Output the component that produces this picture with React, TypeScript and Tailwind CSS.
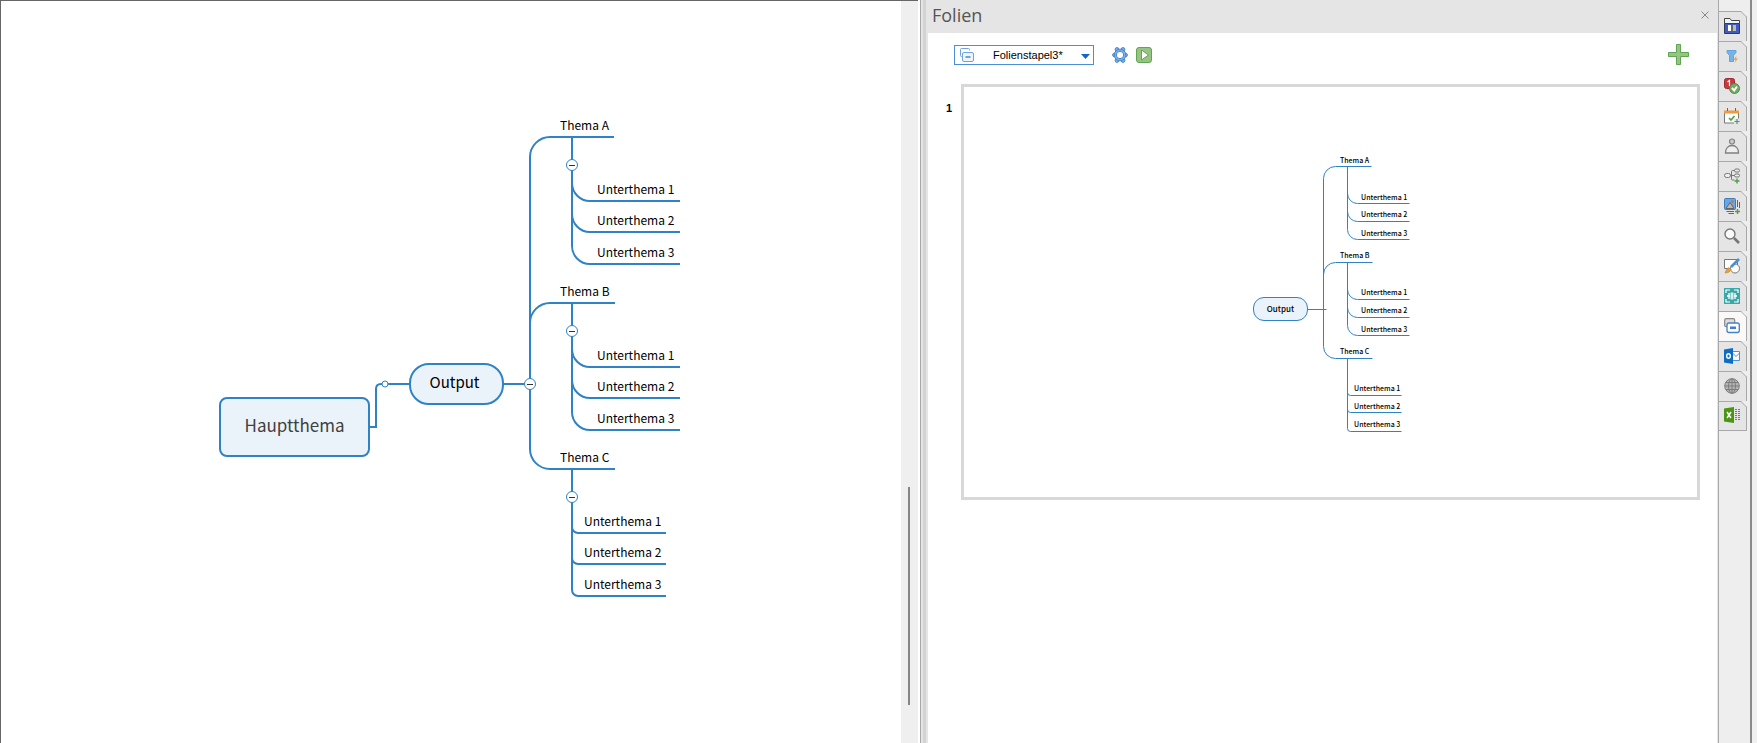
import type { ReactNode } from "react"
import clsx from "clsx"

const BLUE = "#2f83c4"

type Topic = { title: string; y: number; width: number; radius: number; subX: number; subEnd: number }

// map coordinates, origin at the top left corner of the whole map
const TOPICS: Topic[] = [
  { title: "Thema A", y: 21, width: 395, radius: 18, subX: 378, subEnd: 461 },
  { title: "Thema B", y: 187, width: 396, radius: 18, subX: 378, subEnd: 461 },
  { title: "Thema C", y: 353, width: 396, radius: 6, subX: 365, subEnd: 447 },
]
const SUBTOPICS = [
  { title: "Unterthema 1", dy: 64 },
  { title: "Unterthema 2", dy: 95 },
  { title: "Unterthema 3", dy: 127 },
]
const TRUNK_X = 311
const BRANCH_X = 353
const OUTPUT_Y = 268

function Toggle({ x, y, label }: { x: number; y: number; label: string }) {
  return (
    <button
      aria-label={label}
      className="absolute flex size-3 items-center justify-center rounded-full border border-[#2f83c4] bg-white"
      style={{ left: x - 6, top: y - 6 }}
    >
      <span className="h-px w-1.5 bg-[#333]" />
    </button>
  )
}

function MindMap({ preview = false }: { preview?: boolean }) {
  const scale = preview ? 0.577 : 1
  const left = preview ? 190 : 0
  const sx = (v: number) => Math.round((v - left) * scale)
  const sy = (v: number) => Math.round(v * scale)
  const sr = (v: number) => Math.round(v * scale)

  const lines: string[] = []
  TOPICS.forEach((t, i) => {
    const r = sr(20)
    const dir = i === 2 ? -1 : 1
    const sweep = i === 2 ? 0 : 1
    lines.push(
      `M${sx(TRUNK_X)} ${sy(OUTPUT_Y)}V${sy(t.y) + dir * r}A${r} ${r} 0 0 ${sweep} ${sx(TRUNK_X) + r} ${sy(t.y)}H${sx(t.width)}`,
    )
    SUBTOPICS.forEach((s) => {
      const y = sy(t.y + s.dy)
      const c = sr(t.radius)
      lines.push(
        `M${sx(BRANCH_X)} ${sy(t.y)}V${y - c}A${c} ${c} 0 0 0 ${sx(BRANCH_X) + c} ${y}H${sx(t.subEnd)}`,
      )
    })
  })
  lines.push(`M${sx(284)} ${sy(OUTPUT_Y)}H${sx(preview ? 317 : TRUNK_X)}`)
  if (!preview) lines.push("M150 311H157V273Q157 268 162 268H192")

  return (
    <div
      className={clsx(
        "relative shrink-0 whitespace-nowrap font-['Noto_Sans_CJK_SC',sans-serif] text-black",
        preview
          ? "h-[278px] w-[157px] text-[7px] leading-[10px] font-medium"
          : "h-[482px] w-[462px] text-[12px] leading-4",
      )}
    >
      <svg className="absolute inset-0 size-full overflow-visible" fill="none" stroke={BLUE} strokeWidth={preview ? 1 : 2}>
        <g transform={preview ? "translate(.5 .5)" : undefined}>
          {lines.map((d) => (
            <path key={d} d={d} />
          ))}
          {!preview && <circle cx="166" cy="268" r="3" fill="#fff" strokeWidth="1" />}
        </g>
      </svg>

      {!preview && (
        <div className="absolute top-[281px] left-0 flex h-[60px] w-[151px] items-center justify-center rounded-lg border-2 border-[#2f83c4] bg-[#ebf3fa] pb-1 text-[17px] text-[#404040]">
          Hauptthema
        </div>
      )}
      <div
        className={clsx(
          "absolute flex items-center justify-center border-[#2f83c4] bg-[#ebf3fa]",
          preview
            ? "top-[143px] left-0 h-6 w-[55px] rounded-[11px] border text-[8px]"
            : "top-[247px] left-[190px] h-[42px] w-[95px] rounded-[20px] border-2 pr-1 pb-1 text-[15px]",
        )}
      >
        Output
      </div>

      {TOPICS.map((t) => (
        <div key={t.title}>
          <span className="absolute" style={{ left: sx(341), top: sy(t.y - 20) }}>
            {t.title}
          </span>
          {SUBTOPICS.map((s) => (
            <span key={s.title} className="absolute" style={{ left: sx(t.subX), top: sy(t.y + s.dy - 20) }}>
              {s.title}
            </span>
          ))}
          {!preview && <Toggle x={BRANCH_X} y={t.y + 28} label={`${t.title} reduzieren`} />}
        </div>
      ))}
      {!preview && <Toggle x={TRUNK_X} y={OUTPUT_Y} label="Output reduzieren" />}
    </div>
  )
}

function Icon({ children }: { children: ReactNode }) {
  return (
    <svg viewBox="0 0 16 16" className="size-4" fill="none" aria-hidden="true">
      {children}
    </svg>
  )
}

const TABS: { label: string; icon: ReactNode }[] = [
  {
    label: "Bibliothek",
    icon: (
      <>
        <path d="M.5 5.500v-5h5.500l1.500 2h8v3" fill="#f4f4f4" stroke="#444" />
        <path d="M.5 5.500h15v10H.5z" fill="#3f5cc0" stroke="#353a55" />
        <path d="M4 7h3v6H4z" fill="#fff" />
        <path d="M7 7h2v6H7z" fill="#666" />
        <path d="M9 7h3v6H9z" fill="#bbb" />
      </>
    ),
  },
  {
    label: "Filter",
    icon: (
      <>
        <path d="M3 2.500h9v2L9.500 7.500v6h-4v-6L3 4.500z" fill="#78b3e8" stroke="#65a3de" />
        <path d="M12.500 7.500 9.500 12h2L10.500 15 14 10.500h-2z" fill="#f2a24a" />
      </>
    ),
  },
  {
    label: "Marker",
    icon: (
      <>
        <rect x=".5" y=".5" width="10" height="10" rx="2" fill="#c43a40" stroke="#a3262d" />
        <path d="M3.500 4l2-1.500V8" stroke="#fff" strokeWidth="1.200" />
        <circle cx="10.500" cy="10.500" r="5" fill="#6fac62" stroke="#4c8d45" />
        <path d="M8 10l2.200 2.500L13 8.500" stroke="#fff" strokeWidth="2" />
      </>
    ),
  },
  {
    label: "Aufgaben",
    icon: (
      <>
        <path d="M.5 3.500h14v11.500H.5z" fill="#fff" stroke="#777" />
        <path d="M0 2.500h15v3H0z" fill="#f0993e" />
        <path d="M3.500 0v3M11.500 0v3" stroke="#666" />
        <path d="M5 10l2 2 3.500-4" stroke="#4f9f48" strokeWidth="1.600" />
        <path d="M10 10.500h6V16h-6z" fill="#e5e5e5" />
        <path d="M13 11v5M10.500 13.500h5" stroke="#4f9f48" strokeWidth="1.200" />
      </>
    ),
  },
  {
    label: "Ressourcen",
    icon: (
      <>
        <path d="M1.500 15c0-4.500 2.500-7.500 6.500-7.500s6.500 3 6.500 7.500z" fill="#eee" stroke="#808080" strokeWidth="1.300" />
        <circle cx="8" cy="3.500" r="2.500" fill="#ccc" stroke="#808080" strokeWidth="1.200" />
      </>
    ),
  },
  {
    label: "Map-Teile",
    icon: (
      <>
        <path d="M5.500 7.500H11M7.500 7.500v-4q0-1 1-1H11M7.500 7.500V11q0 1 1 1h2" stroke="#777" />
        <rect x=".5" y="5.500" width="6" height="4" rx="2" fill="#eee" stroke="#777" />
        <rect x="10.500" y="1" width="5" height="3" rx="1.500" fill="#eee" stroke="#777" />
        <rect x="10.500" y="6" width="5" height="3" rx="1.500" fill="#eee" stroke="#777" />
        <path d="M13 10.500v5M10.500 13h5" stroke="#4f9f48" strokeWidth="1.400" />
      </>
    ),
  },
  {
    label: "Bilder",
    icon: (
      <>
        <path d="M13.500 2v7M15.500 4v6M2.500 13.500H10M4.500 15.500H10" stroke="#666" />
        <rect x=".5" y=".5" width="11" height="11" rx="1" fill="#6ba5e3" stroke="#3e7cc2" />
        <path d="M2 10.500 6 4.500l4 6z" fill="#b9b9b9" stroke="#666" />
        <circle cx="8.500" cy="3.500" r="1.300" fill="#c9772c" />
        <path d="M13.500 11v5M11 13.500h5" stroke="#4f9f48" strokeWidth="1.400" />
      </>
    ),
  },
  {
    label: "Suchen",
    icon: (
      <>
        <path d="M10 10l5 5" stroke="#777" strokeWidth="2.600" />
        <circle cx="6" cy="6" r="5" fill="#fafafa" stroke="#777" strokeWidth="1.400" />
      </>
    ),
  },
  {
    label: "Formate",
    icon: (
      <>
        <path d="M.5 1.500h13v9H.5z" fill="#fff" stroke="#777" />
        <circle cx="11" cy="10.500" r="4.500" fill="#fff" stroke="#777" />
        <path d="M15 1 7 9" stroke="#4c90d2" strokeWidth="2.600" />
        <path d="M5 9.500 7 11.500c-1 2.500-3 3.500-6 3.500 1-2 1-4.500 4-5.500z" fill="#e5a13a" stroke="#b97b22" strokeWidth=".5" />
      </>
    ),
  },
  {
    label: "Rahmen",
    icon: (
      <>
        <path d="M0 0h16v16H0z" fill="#3aa8a8" />
        <path d="M2 5V2h4M10 2h4v3M14 11v3h-4M6 14H2v-3" stroke="#fff" strokeWidth="1.200" />
        <path d="M5 5v6M11 5v6M3 8h3M10 8h3" stroke="#fff" strokeWidth="1.300" />
        <path d="M6.500 4.500h3v7h-3z" fill="#d9efef" />
      </>
    ),
  },
  {
    label: "Folien",
    icon: (
      <>
        <rect x=".7" y=".7" width="10" height="8" rx="1.500" fill="#ddd" stroke="#888" strokeWidth="1.200" />
        <rect x="3" y="5" width="12.300" height="9.500" rx="2" fill="#fff" stroke="#4a7fc6" strokeWidth="1.300" />
        <path d="M6 8.500h6v2.500H6z" fill="#3f7fd0" />
      </>
    ),
  },
  {
    label: "Outlook",
    icon: (
      <>
        <path d="M8 3.500h7.500v9H8z" fill="#fff" stroke="#4b93d6" />
        <path d="M8.500 5l3.500 3.500L15.500 5" stroke="#4b93d6" />
        <path d="M0 1.500 9 0v16l-9-1.500z" fill="#0d6fc4" />
        <ellipse cx="4.500" cy="8" rx="1.800" ry="2.300" stroke="#fff" strokeWidth="1.400" />
      </>
    ),
  },
  {
    label: "Browser",
    icon: (
      <>
        <circle cx="8" cy="8" r="7.300" fill="#b5b5b5" stroke="#7c7c7c" />
        <ellipse cx="8" cy="8" rx="3.500" ry="7.300" stroke="#7c7c7c" />
        <path d="M8 1v14M1 8h14M2 4.500h12M2 11.500h12" stroke="#7c7c7c" />
      </>
    ),
  },
  {
    label: "Excel",
    icon: (
      <>
        <path d="M12 2v12M15 2v12" stroke="#58a01c" strokeWidth="2" strokeDasharray="1 1" />
        <path d="M0 1.500 10 0v16L0 14.500z" fill="#4c9413" />
        <path d="M3 5l4 6M7 5l-4 6" stroke="#fff" strokeWidth="1.500" />
      </>
    ),
  },
]

function TabStrip() {
  return (
    <nav className="flex border-l border-[#a8a8a8] bg-[#eeeeee]">
      <div className="flex w-[31px] flex-col pt-[11px]">
        {TABS.map((tab) => {
          const active = tab.label === "Folien"
          return (
            <button
              key={tab.label}
              aria-label={tab.label}
              className={clsx(
                "relative flex h-[30px] w-7 items-center justify-center border-t border-r border-[#a8a8a8] pr-px pb-0.5 last:border-b",
                active ? "bg-[#faf9f8]" : "bg-[#e5e5e5]",
              )}
            >
              <Icon>{tab.icon}</Icon>
              {/* clipped corner */}
              <svg viewBox="0 0 6 6" className="absolute -top-px -right-px size-1.5" aria-hidden="true">
                <path d="M0 0h6v6z" fill="#eeeeee" />
                <path d="M0 .5 5.500 6" stroke="#a8a8a8" />
              </svg>
            </button>
          )
        })}
      </div>
      <div className="flex-1 border-l-2 border-[#8a8a8a] bg-[#f0f0f0]" />
    </nav>
  )
}

function SlidePanel() {
  return (
    <aside className="flex min-w-0 border-l border-[#a8a8a8] bg-[#e5e5e5]">
      <div className="ml-0.5 w-[3px] shrink-0 bg-[#d3d3d3]" />
      <div className="ml-0.5 flex min-w-0 flex-1 flex-col pr-px">
        <header className="flex h-[33px] items-center justify-between pr-2 pb-1 pl-1">
          <h1 className="font-['Open_Sans',sans-serif] text-[18px] leading-6 text-[#555]">Folien</h1>
          <button aria-label="Schließen">
            <svg viewBox="0 0 8 8" className="size-2" stroke="#888" fill="none">
              <path d="M.5.5l7 7M7.500.5l-7 7" />
            </svg>
          </button>
        </header>

        <div className="flex flex-1 flex-col bg-white">
          <div className="flex items-center justify-between pt-[11px] pr-7 pb-[19px] pl-[26px]">
            <div className="flex items-center">
              <div className="relative mr-[18px]">
                <select
                  aria-label="Folienstapel"
                  className="block h-5 w-[140px] appearance-none rounded-none border border-[#4a8fdc] bg-white pl-[38px] font-['Liberation_Sans',sans-serif] text-[11px] leading-[18px] text-black"
                >
                  <option>Folienstapel3*</option>
                </select>
                <svg viewBox="0 0 14 14" className="pointer-events-none absolute top-[3px] left-1.5 size-3.5" fill="none">
                  <path d="M2.500 8.500h-1q-1 0-1-1v-6q0-1 1-1h7q1 0 1 1v1" stroke="#6fa3de" />
                  <rect x="2.500" y="4.500" width="11" height="9" rx="1.500" fill="#eef5fc" stroke="#6fa3de" />
                  <path d="M5.500 8h5v2h-5z" fill="#6fa3de" />
                </svg>
                <svg viewBox="0 0 9 5" className="pointer-events-none absolute top-[9px] right-1 h-[5px] w-[9px]">
                  <path d="M0 0h9L4.500 5z" fill="#1464cf" />
                </svg>
              </div>
              <button aria-label="Einstellungen" className="mr-2">
                <Icon>
                  <g fill="#7fb2ea" stroke="#4a86cc">
                    <circle cx="2.300" cy="8" r="1.700" />
                    <circle cx="13.700" cy="8" r="1.700" />
                    <circle cx="5" cy="2.500" r="1.900" />
                    <circle cx="11" cy="2.500" r="1.900" />
                    <circle cx="5" cy="13.500" r="1.900" />
                    <circle cx="11" cy="13.500" r="1.900" />
                    <circle cx="8" cy="8" r="5.800" />
                  </g>
                  <circle cx="8" cy="8" r="3.700" fill="#fff" stroke="#4a86cc" />
                </Icon>
              </button>
              <button aria-label="Präsentation starten">
                <Icon>
                  <rect x=".5" y=".5" width="15" height="15" rx="2.500" fill="#97c383" stroke="#5fa653" />
                  <path d="M5.500 3 12.500 8l-7 5z" fill="#fff" stroke="#5fa653" />
                </Icon>
              </button>
            </div>
            <button aria-label="Folie hinzufügen">
              <svg viewBox="0 0 21 21" className="size-[21px]">
                <path d="M8.500.5h4v8h8v4h-8v8h-4v-8h-8v-4h8z" fill="#97c383" stroke="#5fa653" />
              </svg>
            </button>
          </div>

          <ol className="pr-[17px]">
            <li className="flex">
              <span className="w-[33px] pt-4 pr-[9px] text-right font-['Liberation_Sans',sans-serif] text-[11px] leading-4 font-bold text-black">
                1
              </span>
              <div className="flex aspect-video flex-1 items-center justify-center border-3 border-[#d8d8d8] pt-0.5 pl-0.5">
                <MindMap preview />
              </div>
            </li>
          </ol>
        </div>
      </div>
    </aside>
  )
}

export default function App() {
  return (
    <div className="grid min-h-screen grid-cols-[920fr_798fr_39px] bg-white">
      <main className="flex min-w-0">
        <div className="flex min-w-0 flex-1 justify-center border-t border-l border-[#666] pt-[115px] pr-0.5">
          <MindMap />
        </div>
        <div className="mr-0.5 flex w-[17px] flex-col items-center border-t border-[#666] bg-[#efefef] pr-0.5">
          <div className="mt-[486px] h-[218px] w-0.5 bg-[#858585]" />
        </div>
      </main>
      <SlidePanel />
      <TabStrip />
    </div>
  )
}
